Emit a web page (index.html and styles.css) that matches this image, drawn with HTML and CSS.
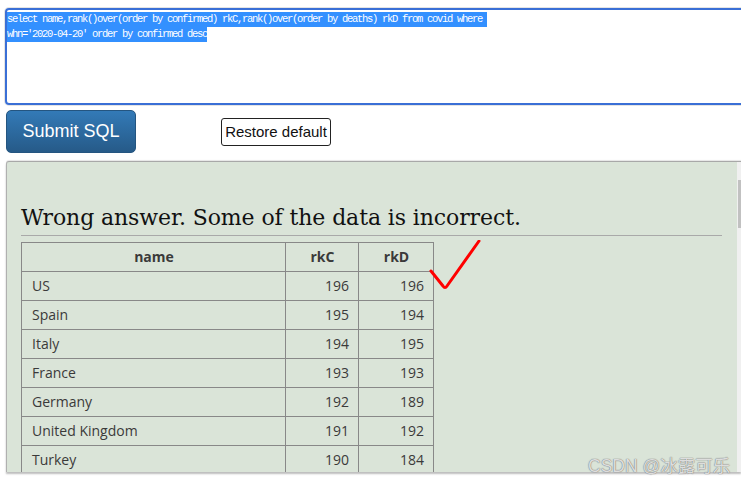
FILE: index.html
```html
<!DOCTYPE html>
<html>
<head>
<meta charset="utf-8">
<link rel="stylesheet" href="styles.css">
</head>
<body>
<div class="editor"><span class="sel">select name,rank()over(order by confirmed) rkC,rank()over(order by deaths) rkD from covid where </span><br><span class="sel">whn='2020-04-20' order by confirmed desc</span></div>
<div class="actions">
  <button class="submit">Submit SQL</button>
  <button class="restore">Restore default</button>
</div>
<div class="panel">
  <div class="content">
    <h2 class="verdict">Wrong answer. Some of the data is incorrect.</h2>
    <div class="tablewrap">
      <table class="result">
        <colgroup><col class="c-name"><col class="c-num"><col class="c-num2"></colgroup>
        <thead><tr><th>name</th><th>rkC</th><th>rkD</th></tr></thead>
        <tbody>
          <tr><td>US</td><td class="n">196</td><td class="n">196</td></tr>
          <tr><td>Spain</td><td class="n">195</td><td class="n">194</td></tr>
          <tr><td>Italy</td><td class="n">194</td><td class="n">195</td></tr>
          <tr><td>France</td><td class="n">193</td><td class="n">193</td></tr>
          <tr><td>Germany</td><td class="n">192</td><td class="n">189</td></tr>
          <tr><td>United Kingdom</td><td class="n">191</td><td class="n">192</td></tr>
          <tr><td>Turkey</td><td class="n">190</td><td class="n">184</td></tr>
        </tbody>
      </table>
      <svg class="check" width="60" height="60" viewBox="0 0 60 60"><path d="M3 31 L15 46 Q17 49 19 46 L51 1" fill="none" stroke="#ff0000" stroke-width="3" stroke-linecap="round" stroke-linejoin="round"/></svg>
    </div>
  </div>
  <div class="scrollbar"><div class="thumb"></div></div>
</div>
<div class="watermark">CSDN @冰露可乐</div>
</body>
</html>
```
FILE: styles.css
```css
html { overflow: hidden; }
body { margin: 0; background: #fff; width: 741px; height: 485px; position: relative; }

.editor {
  margin: 8px 0 0 5px;
  width: 780px;
  height: 91px;
  border: 2px solid #3a6fd6;
  border-radius: 4px;
  padding: 2px 0 0 0;
  box-sizing: content-box;
  font-family: "Liberation Mono", monospace;
  font-size: 10.5px;
  letter-spacing: -1.3px;
  white-space: pre;
  line-height: 15px;
  box-shadow: 0 0 0 1px #e4e4e4;
}
.sel {
  display: inline-block;
  background: #3390ff;
  color: #fff;
  height: 15px;
  line-height: 15px;
}

.actions {
  display: flex;
  align-items: center;
  margin: 5px 0 0 6px;
}
.submit {
  width: 130px;
  height: 43px;
  border: 1px solid #245580;
  border-radius: 5px;
  background: linear-gradient(#337ab7, #265a88);
  color: #fff;
  font-family: "Liberation Sans", Arial, sans-serif;
  font-size: 18px;
  padding: 0;
}
.restore {
  margin-left: 85px;
  height: 28px;
  width: 110px;
  padding: 0;
  background: #fff;
  border: 1px solid #222;
  border-radius: 3px;
  font-family: "Liberation Sans", Arial, sans-serif;
  font-size: 15px;
  color: #111;
}

.panel {
  display: flex;
  margin: 8px 0 0 6px;
  height: 311px;
  border-top: 1px solid #a8a8a8;
  border-left: 1px solid #b0b0b0;
  border-top-left-radius: 3px;
  background: #dae4d8;
  box-shadow: 0 -1px 1px #e6e6e6, 0 2px 2px #bdbdbd;
  overflow: hidden;
  box-sizing: border-box;
}
.content {
  flex: 1;
  padding: 41px 15px 0 14px;
}
.verdict {
  margin: 0;
  font-family: "DejaVu Serif", Georgia, serif;
  font-weight: normal;
  font-size: 22px;
  letter-spacing: -0.1px;
  line-height: 30px;
  color: #111;
  padding-bottom: 2px;
  border-bottom: 1px solid #a9a9a9;
}
.tablewrap {
  position: relative;
  margin-top: 6px;
}
.result {
  border-collapse: collapse;
  table-layout: fixed;
  width: 412px;
  font-family: "Open Sans", sans-serif;
  font-size: 14px;
  color: #3a3a3a;
}
.c-name { width: 264px; }
.c-num { width: 73px; }
.c-num2 { width: 75px; }
.result th, .result td {
  border: 1px solid #888;
  padding: 4px 9px 4px 10px;
  line-height: 20px;
}
.result th { font-weight: bold; text-align: center; }
.result td.n { text-align: right; }
.check {
  position: absolute;
  left: 407px;
  top: -2px;
}

.scrollbar {
  width: 4px;
  background: #f0f0f0;
  flex: none;
}
.thumb {
  margin-top: 18px;
  height: 48px;
  background: #c1c1c1;
  margin-left: 1px;
}
.watermark {
  position: absolute;
  left: 588px;
  top: 455px;
  font-family: "Liberation Sans", "Noto Sans CJK SC", sans-serif;
  font-size: 17.5px;
  line-height: 22px;
  color: rgba(255,255,255,0.75);
  text-shadow: 0 0 1px #777, 0 0 1px #777;
  white-space: nowrap;
}
```
